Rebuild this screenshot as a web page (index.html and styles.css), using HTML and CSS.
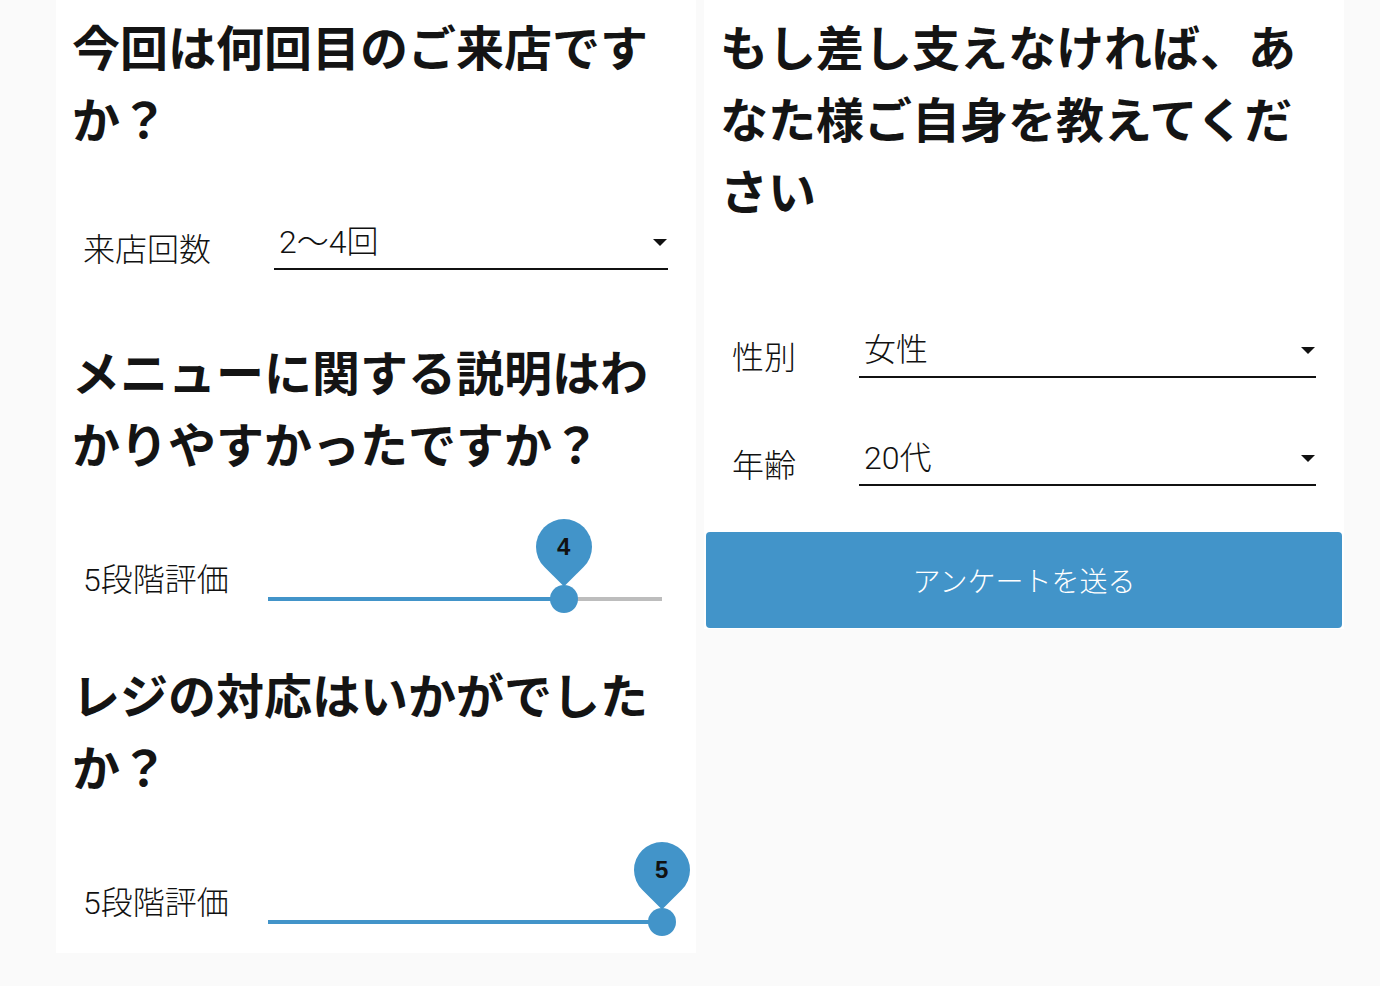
FILE: index.html
```html
<!DOCTYPE html>
<html lang="ja">
<head>
<meta charset="utf-8">
<title>アンケート</title>
<link rel="stylesheet" href="styles.css">
</head>
<body>
<div class="page">
  <section class="card card-left">
    <h2 class="q-title">今回は何回目のご来店ですか？</h2>
    <div class="field field-select first-select">
      <span class="field-label">来店回数</span>
      <div class="select"><span class="select-value">2〜4回</span><span class="select-arrow"></span></div>
    </div>

    <h2 class="q-title after-select">メニューに関する説明はわかりやすかったですか？</h2>
    <div class="field field-slider">
      <span class="field-label slider-label">5段階評価</span>
      <div class="slider">
        <div class="slider-rail"></div>
        <div class="slider-track" style="width:75%"></div>
        <div class="slider-thumb" style="left:75%"></div>
        <div class="slider-bubble" style="left:75%"><span class="bubble-text">4</span></div>
      </div>
    </div>

    <h2 class="q-title after-slider">レジの対応はいかがでしたか？</h2>
    <div class="field field-slider">
      <span class="field-label slider-label">5段階評価</span>
      <div class="slider">
        <div class="slider-rail"></div>
        <div class="slider-track" style="width:100%"></div>
        <div class="slider-thumb" style="left:100%"></div>
        <div class="slider-bubble" style="left:100%"><span class="bubble-text">5</span></div>
      </div>
    </div>
  </section>

  <section class="card card-right">
    <h2 class="q-title">もし差し支えなければ、あなた様ご自身を教えてください</h2>
    <div class="field field-select profile-first">
      <span class="field-label">性別</span>
      <div class="select"><span class="select-value">女性</span><span class="select-arrow"></span></div>
    </div>
    <div class="field field-select profile-next">
      <span class="field-label">年齢</span>
      <div class="select"><span class="select-value">20代</span><span class="select-arrow"></span></div>
    </div>
    <button class="submit" type="button">アンケートを送る</button>
  </section>
</div>
</body>
</html>
```

FILE: styles.css
```css
* { box-sizing: border-box; }

html, body {
  margin: 0;
  background: #fafafa;
}

body {
  font-family: "Noto Sans CJK JP", "Noto Sans", sans-serif;
  color: #111;
}

.page {
  display: grid;
  grid-template-columns: 640px 640px;
  gap: 8px;
  padding-left: 56px;
  align-items: start;
}

.card {
  background: #fff;
  padding-top: 9px;
}

.card-left {
  padding-bottom: 17px;
}

.card-right {
  padding-bottom: 1px;
}

.q-title {
  margin: 0;
  padding: 0 16px;
  font-size: 48px;
  line-height: 72px;
  font-weight: 700;
  color: #141414;
}

.after-select { margin-top: 64px; }
.after-slider { margin-top: 44px; }

.field {
  display: flex;
  align-items: flex-end;
  padding: 0 28px 0 27px;
}

.field-label {
  font-family: "Roboto", "Noto Sans CJK JP", sans-serif;
  font-size: 32px;
  line-height: 40px;
  font-weight: 300;
  color: #111;
  white-space: nowrap;
  margin-right: 63px;
}

.first-select { margin-top: 69px; }
.profile-first { margin-top: 105px; padding-left: 28px; }
.profile-next { margin-top: 60px; padding-left: 28px; }

.select {
  flex: 1;
  display: flex;
  align-items: center;
  justify-content: space-between;
  padding: 0 1px 6px 5px;
  border-bottom: 2px solid #111;
}

.select-value {
  font-family: "Roboto", "Noto Sans CJK JP", sans-serif;
  font-size: 32px;
  line-height: 40px;
  font-weight: 300;
  color: #111;
}

.select-arrow {
  width: 0;
  height: 0;
  border-left: 7px solid transparent;
  border-right: 7px solid transparent;
  border-top: 7px solid #111;
}

.field-slider {
  margin-top: 82px;
  padding-right: 34px;
}

.slider-label {
  margin-right: 0;
  margin-bottom: 13px;
}

.slider {
  position: relative;
  width: 394px;
  height: 28px;
  margin-left: auto;
}

.slider-rail {
  position: absolute;
  left: 0;
  right: 0;
  top: 12px;
  height: 4px;
  background: #bdbdbd;
}

.slider-track {
  position: absolute;
  left: 0;
  top: 12px;
  height: 4px;
  background: #4294c9;
}

.slider-thumb {
  position: absolute;
  top: 0;
  width: 28px;
  height: 28px;
  margin-left: -14px;
  border-radius: 50%;
  background: #4294c9;
}

.slider-bubble {
  position: absolute;
  top: -66px;
  width: 56px;
  height: 56px;
  margin-left: -28px;
  border-radius: 50% 50% 50% 0;
  background: #4294c9;
  transform: rotate(-45deg);
  display: flex;
  align-items: center;
  justify-content: center;
}

.bubble-text {
  transform: rotate(45deg);
  font-family: "Liberation Sans", "Noto Sans", sans-serif;
  font-size: 24px;
  line-height: 24px;
  font-weight: 700;
  color: #111;
}

.submit {
  display: block;
  width: calc(100% - 4px);
  height: 96px;
  margin: 46px 2px 0;
  border: 0;
  border-radius: 4px;
  background: #4294c9;
  color: #fff;
  font-family: "Noto Sans CJK JP", "Noto Sans", sans-serif;
  font-size: 28px;
  font-weight: 300;
  cursor: pointer;
}
```
